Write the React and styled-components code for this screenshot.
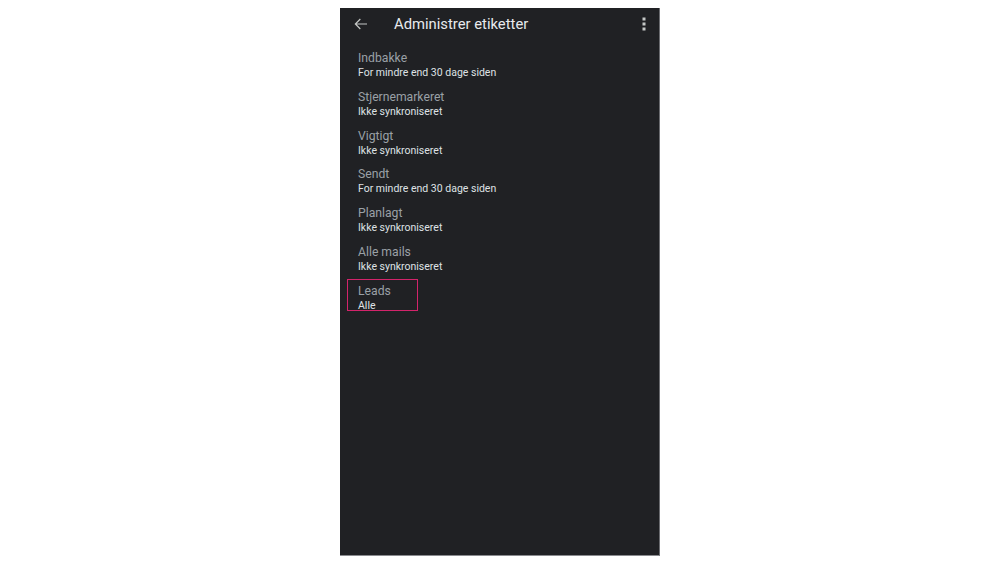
import React from 'react';
import styled, { createGlobalStyle } from 'styled-components';

const Global = createGlobalStyle`
  html, body {
    margin: 0;
    padding: 0;
    background: #ffffff;
  }
  body {
    font-family: Roboto, "Noto Sans", sans-serif;
  }
`;

const Page = styled.div`
  width: 1000px;
  height: 563px;
  display: flex;
  justify-content: center;
  padding-top: 8px;
  box-sizing: border-box;
`;

const Phone = styled.div`
  width: 320px;
  height: 548px;
  background: #202124;
  border-right: 1px solid #6b6c70;
  border-bottom: 1px solid #8a8b8f;
  box-sizing: border-box;
  display: flex;
  flex-direction: column;
`;

const Toolbar = styled.div`
  height: 31px;
  display: flex;
  align-items: center;
  padding: 0 6px 0 12px;
`;

const IconButton = styled.div`
  width: 18px;
  height: 18px;
  display: flex;
  align-items: center;
  justify-content: center;
  color: #c4c7c5;
`;

const Title = styled.h1`
  flex: 1;
  margin: 0 0 0 24px;
  font-size: 14.8px;
  font-weight: 400;
  color: #e8eaed;
`;

const List = styled.div`
  display: flex;
  flex-direction: column;
  padding: 11px 0 0 18px;
`;

const Item = styled.div`
  height: 38.8px;
  display: flex;
  flex-direction: column;
  position: relative;
`;

const Name = styled.div`
  font-size: 12.2px;
  color: #9aa0a6;
  line-height: 16px;
`;

const Status = styled.div`
  font-size: 10.5px;
  color: #dfe1e4;
  line-height: 14px;
`;

const Highlight = styled.div`
  position: absolute;
  left: -11px;
  top: -4px;
  width: 71px;
  height: 32px;
  border: 1px solid #d3246b;
  box-sizing: border-box;
`;

const labels = [
  ['Indbakke', 'For mindre end 30 dage siden'],
  ['Stjernemarkeret', 'Ikke synkroniseret'],
  ['Vigtigt', 'Ikke synkroniseret'],
  ['Sendt', 'For mindre end 30 dage siden'],
  ['Planlagt', 'Ikke synkroniseret'],
  ['Alle mails', 'Ikke synkroniseret'],
  ['Leads', 'Alle', true],
];

export default function App() {
  return (
    <>
      <Global />
      <Page>
        <Phone>
          <Toolbar>
            <IconButton>
              <svg width="16" height="16" viewBox="0 0 24 24" fill="none" stroke="currentColor" strokeWidth="1.8">
                <path d="M21 12H3.5M11 4.5L3.5 12l7.5 7.5" />
              </svg>
            </IconButton>
            <Title>Administrer etiketter</Title>
            <IconButton>
              <svg width="4" height="14" viewBox="0 0 4 14" fill="#c4c7c5">
                <rect x="0.5" y="0.5" width="3" height="3" />
                <rect x="0.5" y="5.5" width="3" height="3" />
                <rect x="0.5" y="10.5" width="3" height="3" />
              </svg>
            </IconButton>
          </Toolbar>
          <List>
            {labels.map(([name, status, marked]) => (
              <Item key={name}>
                {marked && <Highlight />}
                <Name>{name}</Name>
                <Status>{status}</Status>
              </Item>
            ))}
          </List>
        </Phone>
      </Page>
    </>
  );
}
